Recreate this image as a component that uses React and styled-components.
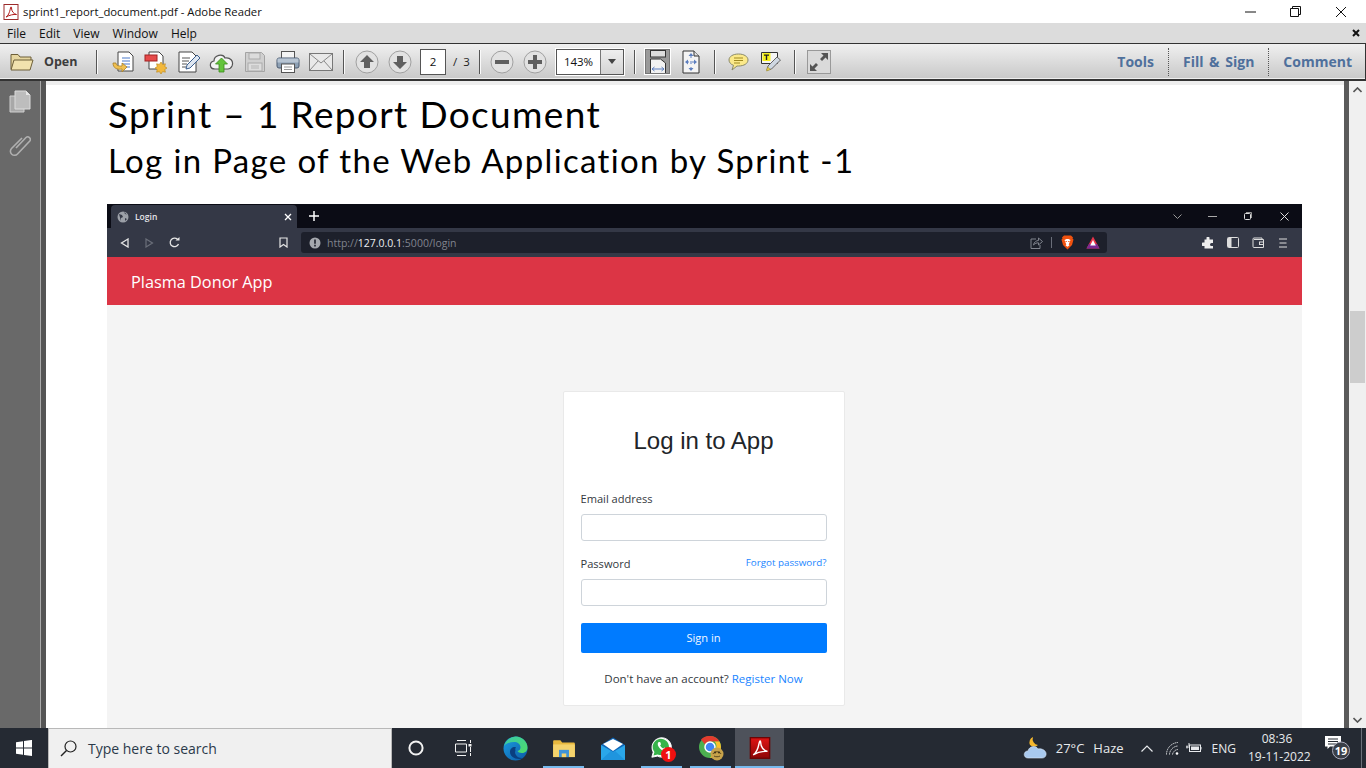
import styled, { createGlobalStyle } from "styled-components";

const GlobalStyle = createGlobalStyle`
  html, body { margin: 0; padding: 0; overflow: hidden; background: #fff; }
  * { box-sizing: border-box; }
`;

const Screen = styled.div`
  width: 1366px;
  height: 768px;
  display: flex;
  flex-direction: column;
  overflow: hidden;
  font-family: "Open Sans", "Liberation Sans", sans-serif;
`;

/* title bar + menu */
const TitleBar = styled.div`
  height: 23px;
  flex: none;
  display: flex;
  align-items: center;
  background: #fff;
  padding: 0 3px;
  font-size: 11.3px;
  color: #111;
`;
const TitleText = styled.span`
  margin-left: 4px;
  flex: 1;
`;
const WinButton = styled.div`
  width: 45px;
  height: 23px;
  display: flex;
  align-items: center;
  justify-content: center;
`;
const MenuBar = styled.div`
  height: 20px;
  flex: none;
  display: flex;
  align-items: center;
  background: #dcdcdc;
  padding: 0 6px 0 7px;
  font-size: 12px;
  color: #111;
  gap: 13px;
`;
const CloseDoc = styled.div`
  margin-left: auto;
  display: flex;
`;

/* adobe toolbar */
const Toolbar = styled.div`
  height: 38px;
  flex: none;
  display: flex;
  align-items: center;
  background: linear-gradient(#f0f0f0, #c8c8c8);
  border: 1px solid #333;
  border-width: 1.5px 1px 2px 0;
  box-shadow: inset 0 -1px 0 #eee;
  padding-left: 10px;
`;
const OpenButton = styled.div`
  width: 86px;
  display: flex;
  align-items: center;
  gap: 10px;
  font-size: 12.5px;
  font-weight: 700;
  color: #3c3c3c;
`;
const Sep = styled.div`
  width: 2px;
  height: 24px;
  flex: none;
  margin-left: ${(p) => p.$ml || 0}px;
  background: linear-gradient(90deg, #555 50%, #fafafa 50%);
`;
const Group = styled.div`
  display: flex;
  margin-left: ${(p) => p.$ml || 0}px;
`;
const Slot = styled.div`
  width: 33px;
  height: 30px;
  display: flex;
  align-items: center;
  justify-content: center;
`;
const ActiveTool = styled.div`
  width: 27px;
  height: 27px;
  display: flex;
  align-items: center;
  justify-content: center;
  background: #9a9a9a;
  border: 1px solid #fff;
  outline: 1px solid #777;
  outline-offset: -2px;
`;
const PageInput = styled.div`
  width: 26px;
  height: 26px;
  margin-left: 4px;
  background: #fff;
  border: 1px solid #555;
  display: flex;
  align-items: center;
  justify-content: center;
  font-size: 11.5px;
  color: #111;
`;
const PageCount = styled.span`
  margin-left: 7px;
  width: 16px;
  font-size: 11.5px;
  color: #222;
  white-space: pre;
`;
const ZoomBox = styled.div`
  width: 68px;
  height: 26px;
  margin-left: 5px;
  display: flex;
  background: #fff;
  border: 1px solid #555;
  box-shadow: 0 0 0 1px #fff;
  font-size: 11.5px;
  color: #111;
`;
const ZoomValue = styled.div`
  flex: 1;
  display: flex;
  align-items: center;
  justify-content: center;
  border-right: 1px solid #777;
`;
const ZoomArrow = styled.div`
  width: 22px;
  display: flex;
  align-items: center;
  justify-content: center;
  background: linear-gradient(#eee, #d4d4d4);
`;
const PanelTabs = styled.div`
  margin-left: auto;
  display: flex;
  align-items: center;
  height: 30px;
  padding-right: 13px;
`;
const PanelTab = styled.div`
  height: 28px;
  display: flex;
  align-items: center;
  padding: 0 14px;
  font-size: 14px;
  font-weight: 700;
  word-spacing: 2px;
  color: #4f709c;
  border-left: ${(p) => (p.$first ? "none" : "1px dotted #555")};
  &:last-child { padding-right: 0; }
`;

/* reader body */
const Main = styled.div`
  flex: 1;
  min-height: 0;
  display: flex;
`;
const Sidebar = styled.div`
  width: 46px;
  flex: none;
  background: #696969;
  border-right: 5px solid #555;
  box-shadow: inset -1px 0 0 #aaa;
  display: flex;
  flex-direction: column;
  padding: 9px 0 0 9px;
  gap: 20px;
`;
const Viewer = styled.div`
  flex: 1;
  min-width: 0;
  background: #fff;
  overflow: hidden;
  border-top: 4px solid #eee;
  padding-left: 61px;
`;
const DocTitle = styled.h1`
  margin: 5px 0 0 1px;
  font-family: Lato, "Open Sans", sans-serif;
  font-variant-ligatures: none;
  font-size: 37px;
  letter-spacing: 1.35px;
  line-height: 48px;
  font-weight: 400;
  color: #000;
`;
const DocSubtitle = styled.h2`
  margin: 0 0 0 1px;
  font-family: Lato, "Open Sans", sans-serif;
  font-variant-ligatures: none;
  font-size: 33px;
  letter-spacing: 1.35px;
  line-height: 44px;
  font-weight: 400;
  color: #000;
`;
const ScrollEdge = styled.div`
  width: 5px;
  flex: none;
  background: #5a5a5a;
`;
const ScrollBar = styled.div`
  width: 17px;
  flex: none;
  background: #f0f0f0;
  display: flex;
  flex-direction: column;
  align-items: center;
`;
const ScrollArrow = styled.div`
  height: 17px;
  width: 100%;
  display: flex;
  align-items: center;
  justify-content: center;
  margin-top: ${(p) => (p.$end ? "auto" : "0")};
`;
const ScrollThumb = styled.div`
  width: 15px;
  height: 72px;
  margin-top: 213px;
  background: #cdcdcd;
`;

/* screenshot of the browser inside the pdf */
const Browser = styled.div`
  width: 1195px;
  margin-top: 22px;
  background: #f4f4f4;
`;
const TabStrip = styled.div`
  height: 24px;
  display: flex;
  align-items: flex-end;
  background: #0b0c15;
  padding-left: 4px;
`;
const BrowserTab = styled.div`
  width: 186px;
  height: 23px;
  display: flex;
  align-items: center;
  background: #343846;
  border-radius: 4px 4px 0 0;
  padding: 0 5px 0 6px;
  font-size: 8.5px;
  font-weight: 600;
  color: #e4e6ea;
  gap: 6px;
`;
const TabLabel = styled.span`
  flex: 1;
`;
const NewTab = styled.div`
  width: 34px;
  height: 24px;
  display: flex;
  align-items: center;
  justify-content: center;
`;
const StripControls = styled.div`
  margin-left: auto;
  height: 24px;
  display: flex;
  align-items: center;
`;
const StripButton = styled.div`
  width: 35.7px;
  height: 24px;
  display: flex;
  align-items: center;
  justify-content: center;
`;
const AddressRow = styled.div`
  height: 29px;
  display: flex;
  align-items: center;
  background: #343846;
  padding-left: 5px;
`;
const NavSlot = styled.div`
  width: 25px;
  height: 28px;
  display: flex;
  align-items: center;
  justify-content: center;
`;
const Bookmark = styled(NavSlot)`
  margin-left: 84px;
`;
const UrlBar = styled.div`
  width: 806px;
  height: 21px;
  margin-left: 5px;
  display: flex;
  align-items: center;
  background: #1d202b;
  border-radius: 3px;
  padding: 0 7px 0 8px;
  font-size: 10.5px;
  color: #80848e;
`;
const UrlText = styled.span`
  margin-left: 6px;
  flex: 1;
`;
const UrlHost = styled.span`
  color: #eceef1;
`;
const UrlDivider = styled.div`
  width: 1px;
  height: 11px;
  background: #6a6e79;
  margin: 0 9px 0 8px;
`;
const BatWrap = styled.div`
  display: flex;
  margin-left: 12px;
`;
const ExtGroup = styled.div`
  display: flex;
  margin-left: 88px;
`;
const AppNavbar = styled.div`
  height: 48px;
  display: flex;
  align-items: center;
  background: #dc3545;
  padding: 1px 0 0 24px;
  font-size: 16.3px;
  color: #fff;
`;
const AppBody = styled.div`
  display: flex;
  justify-content: center;
  padding: 86px 2px 40px 0;
`;
const Card = styled.div`
  width: 282px;
  height: 315px;
  background: #fff;
  border: 1px solid #e9e9e9;
  border-radius: 2px;
  padding: 0 17px;
  display: flex;
  flex-direction: column;
`;
const CardTitle = styled.div`
  margin-top: 34px;
  height: 30px;
  line-height: 30px;
  text-align: center;
  font-family: "Liberation Sans", Arial, sans-serif;
  font-size: 24px;
  color: #212529;
`;
const LabelRow = styled.div`
  display: flex;
  justify-content: space-between;
  align-items: flex-start;
  height: 16px;
  line-height: 16px;
  margin-top: ${(p) => p.$mt}px;
  font-size: 11.1px;
  color: #33383d;
`;
const LinkText = styled.span`
  color: #1a85ff;
  font-size: ${(p) => p.$size || 11.5}px;
  line-height: ${(p) => (p.$lift ? "14px" : "inherit")};
`;
const Field = styled.div`
  height: 27px;
  margin-top: 7px;
  background: #fff;
  border: 1px solid #ced4da;
  border-radius: 3px;
`;
const SignIn = styled.div`
  height: 30px;
  margin-top: 17px;
  padding-bottom: 1px;
  display: flex;
  align-items: center;
  justify-content: center;
  background: #007bff;
  border-radius: 2px;
  color: #f2f7ff;
  font-size: 11.1px;
`;
const CardFooter = styled.div`
  margin-top: 18px;
  text-align: center;
  font-size: 11.5px;
  line-height: 16px;
  color: #33383d;
`;

/* windows taskbar */
const Taskbar = styled.div`
  height: 40px;
  flex: none;
  display: flex;
  align-items: stretch;
  background: #252a33;
  color: #e8eaed;
  font-size: 13px;
`;
const StartButton = styled.div`
  width: 48px;
  display: flex;
  align-items: center;
  justify-content: center;
`;
const SearchBox = styled.div`
  width: 344px;
  display: flex;
  align-items: center;
  background: #f0f0f0;
  border: 1px solid #b8b8b8;
  border-bottom: none;
  padding-left: 11px;
  font-size: 14px;
  color: #2b3a4a;
  gap: 11px;
`;
const TaskSlot = styled.div`
  width: ${(p) => p.$w || 49}px;
  padding-left: ${(p) => p.$pl || 0}px;
  display: flex;
  align-items: center;
  justify-content: center;
  position: relative;
  background: ${(p) => (p.$active ? "#4e525b" : "transparent")};
  &::after {
    content: "";
    display: ${(p) => (p.$open ? "block" : "none")};
    position: absolute;
    bottom: 0;
    left: ${(p) => (p.$active ? 0 : 4)}px;
    right: ${(p) => (p.$active ? 0 : 4)}px;
    height: 2px;
    background: #76b9ed;
  }
`;
const CountBadge = styled.span`
  position: absolute;
  left: 24px;
  top: 19px;
  width: 15px;
  height: 15px;
  border-radius: 50%;
  background: #f01010;
  color: #fff;
  font-size: 11px;
  font-weight: 700;
  line-height: 15px;
  text-align: center;
`;
const Tray = styled.div`
  margin-left: auto;
  display: flex;
  align-items: center;
  padding-right: 4px;
`;
const TrayText = styled.span`
  margin-left: ${(p) => p.$ml || 0}px;
  font-size: ${(p) => p.$size || 13}px;
  white-space: nowrap;
`;
const TrayIcon = styled.div`
  margin-left: ${(p) => p.$ml || 0}px;
  display: flex;
`;
const Clock = styled.div`
  margin-left: 12px;
  width: 58px;
  text-align: center;
  font-size: 12px;
  line-height: 18px;
  white-space: nowrap;
`;
const NotifyBox = styled.div`
  margin-left: 19px;
  width: 26px;
  height: 32px;
  display: flex;
  align-items: center;
`;
const DesktopEdge = styled.div`
  width: 1px;
  height: 40px;
  margin-left: 10px;
  background: #6b7079;
`;

const AdobeGlyph = ({ size = 16, soft }) => (
  <svg width={size} height={size} viewBox="0 0 16 16">
    <defs>
      <linearGradient id="adobeRed" x1="0" y1="0" x2="0" y2="1">
        <stop offset="0" stopColor="#e01414" />
        <stop offset="1" stopColor="#8c0606" />
      </linearGradient>
    </defs>
    <rect x="1" y="0.5" width="14" height="15" fill={soft ? "#fff" : "url(#adobeRed)"} stroke={soft ? "#9b2b2b" : "#6d0606"} />
    <path
      d="M3 13c2-1 3.500-4 4.500-9 .3-1.500 1-1.500 1 0 0 3 2 6 5 6.500-3-.3-7 .5-10.500 2.500z"
      fill="none"
      stroke={soft ? "#b01818" : "#fff"}
      strokeWidth="1"
    />
  </svg>
);

const ToolIcon = ({ kind }) => {
  switch (kind) {
    case "open-doc":
      return (
        <svg width="24" height="24" viewBox="0 0 24 24">
          <path d="M7 2h11l4 4v15H7z" fill="#fff" stroke="#444" />
          <path d="M11 8h8M11 11h8M11 14h8M13 17h6" stroke="#4a79c9" />
          <path d="M2 13c0 5 4 7 9 6v3l5-5-5-4v3c-3 0-6 0-6-3z" fill="#f1c050" stroke="#a8802a" strokeWidth=".8" />
        </svg>
      );
    case "create":
      return (
        <svg width="24" height="24" viewBox="0 0 24 24">
          <path d="M5 2h10l4 4v13H5z" fill="#fff" stroke="#444" />
          <rect x="1" y="5" width="12" height="6" fill="#e64a4a" stroke="#a12222" />
          <path d="M17 12l1.600 2.400 2.800-.6-.6 2.800 2.200 1.400-2.200 1.500.6 2.700-2.800-.6-1.600 2.400-1.600-2.400-2.800.6.600-2.700-2.200-1.500 2.200-1.400-.6-2.800 2.800.6z" fill="#f2b83c" stroke="#b98518" strokeWidth=".6" />
        </svg>
      );
    case "edit":
      return (
        <svg width="24" height="24" viewBox="0 0 24 24">
          <path d="M2 2h13l4 4v16H2z" fill="#fff" stroke="#444" />
          <path d="M5 8h8M5 11h7M5 14h5M5 17h4" stroke="#555" />
          <path d="M9 19l1-4 10-10 3 3-10 10z" fill="#dfe7f1" stroke="#3c5f8f" />
        </svg>
      );
    case "cloud":
      return (
        <svg width="25" height="24" viewBox="0 0 25 24">
          <path d="M6 19c-6 0-6-7-1-8 0-6 9-8 11-3 5-1 9 3 7 8-1 2-2 3-4 3z" fill="#f4f4f4" stroke="#555" strokeWidth="1.200" />
          <path d="M12.500 8l6 6h-3.500v8h-5v-8h-3.500z" fill="#64c43c" stroke="#3a8a1c" strokeWidth=".8" />
        </svg>
      );
    case "save":
      return (
        <svg width="22" height="22" viewBox="0 0 22 22">
          <path d="M1.500 1.500h16l3 3v16h-19z" fill="#d0d0d0" stroke="#a3a3a3" />
          <rect x="5" y="2" width="11" height="6" fill="#dcdcdc" stroke="#aaa" />
          <rect x="4" y="12" width="14" height="8" fill="#ddd" stroke="#aaa" />
          <path d="M7 15h8M7 17h8" stroke="#b5b5b5" />
        </svg>
      );
    case "print":
      return (
        <svg width="24" height="24" viewBox="0 0 24 24">
          <rect x="5.500" y="1.500" width="13" height="7" fill="#f4f4f4" stroke="#555" />
          <rect x="1" y="8" width="22" height="10" rx="2" fill="#8ea1b5" stroke="#4a5a70" />
          <rect x="1.500" y="8.500" width="21" height="4" fill="#b8c5d3" />
          <rect x="5.500" y="14" width="13" height="8.500" fill="#fff" stroke="#555" />
          <path d="M8 17h8M8 19.500h8" stroke="#999" />
        </svg>
      );
    case "mail":
      return (
        <svg width="24" height="18" viewBox="0 0 24 18">
          <rect x=".5" y=".5" width="23" height="17" fill="#e9e9e9" stroke="#777" />
          <path d="M1 1l11 9 11-9M1 17l8-9M23 17l-8-9" fill="none" stroke="#888" />
        </svg>
      );
    case "up":
    case "down":
      return (
        <svg width="24" height="24" viewBox="0 0 24 24">
          <circle cx="12" cy="12" r="11" fill="#e2e2e2" stroke="#a0a0a0" />
          <path
            d={kind === "up" ? "M12 5l7 7h-4v6H9v-6H5z" : "M12 19l7-7h-4V6H9v6H5z"}
            fill="#5f5f5f"
          />
        </svg>
      );
    case "minus":
    case "plus":
      return (
        <svg width="24" height="24" viewBox="0 0 24 24">
          <circle cx="12" cy="12" r="11" fill="#e2e2e2" stroke="#a0a0a0" />
          <path d={kind === "minus" ? "M5 10h14v4H5z" : "M10 5h4v5h5v4h-5v5h-4v-5H5v-4h5z"} fill="#5f5f5f" />
        </svg>
      );
    case "fit-width":
      return (
        <svg width="18" height="24" viewBox="0 0 18 24">
          <rect x="1.500" y=".5" width="15" height="6.500" fill="#dcdcdc" stroke="#333" />
          <path d="M1.500 9h10l5 4v10.500h-15z" fill="#f2f2f2" stroke="#333" />
          <path d="M3 19h12M3 19l2.500-2M3 19l2.500 2M15 19l-2.500-2M15 19l-2.500 2" stroke="#5d7fc0" fill="none" />
        </svg>
      );
    case "fit-page":
      return (
        <svg width="18" height="24" viewBox="0 0 18 24">
          <path d="M1 1h11l5 5v17H1z" fill="#f4f4f4" stroke="#333" />
          <path d="M12 1v5h5" fill="#e0e0e0" stroke="#333" />
          <path d="M9 5v15M4 12h10" stroke="#5d7fc0" strokeDasharray="3 3" />
          <path d="M9 3l-2.500 3h5zM9 21l-2.500-3h5zM3 12l3-2.500v5zM15 12l-3-2.500v5z" fill="#5d7fc0" />
        </svg>
      );
    case "note":
      return (
        <svg width="21" height="18" viewBox="0 0 21 18">
          <path d="M10.500 1C5 1 1 3.500 1 7c0 2.500 2 4.500 4.500 5.300L4 17l5-4h1.500C16 13 20 10.500 20 7s-4-6-9.500-6z" fill="#fbe98a" stroke="#8a8a6a" />
          <path d="M6 5h9M6 7.500h9M6 10h6" stroke="#a08a20" />
        </svg>
      );
    case "highlight":
      return (
        <svg width="21" height="21" viewBox="0 0 21 21">
          <path d="M.5 1.500h16v11H.5z" fill="#f4f4f4" stroke="#333" />
          <rect x="1.500" y="2" width="8" height="8" fill="#f7f01c" />
          <path d="M3 3.500h5v1.200H6.200V9H4.800V4.700H3z" fill="#222" />
          <path d="M6 19l1-4 9-9 3.500 3-9 9z" fill="#cfd8e2" stroke="#666" />
          <path d="M5.500 20l1-4 3 2.500z" fill="#f2d648" stroke="#8a7a20" strokeWidth=".5" />
        </svg>
      );
    case "expand":
      return (
        <svg width="24" height="24" viewBox="0 0 24 24">
          <rect x=".5" y=".5" width="23" height="23" fill="#dadada" stroke="#999" />
          <path d="M14 3h7v7l-2.500-2.500L15 11l-2-2 3.500-3.500zM10 21H3v-7l2.500 2.500L9 13l2 2-3.500 3.500z" fill="#555" />
        </svg>
      );
    default:
      return null;
  }
};

const FirstTools = ["open-doc", "create", "edit", "cloud", "save", "print", "mail"];

const Brave = () => (
  <svg width="13" height="15" viewBox="0 0 13 15">
    <path d="M3 .5h7l2 2-.5 1 1 1L11 10l-4.500 4.500L2 10 .5 4.500l1-1-.5-1z" fill="#f0520f" />
    <path d="M3.500 5l2-1h2l2 1-1 2.500-.8 2 .8.800-2 1.500-2-1.500.8-.8-.8-2z" fill="#fff" />
    <path d="M4.500 6.500h1.300M7.200 6.500h1.300" stroke="#f0520f" />
  </svg>
);

const Bat = () => (
  <svg width="14" height="13" viewBox="0 0 14 13">
    <path d="M7 .5L13.500 12.500H.5z" fill="#e8344a" />
    <path d="M.5 12.500h13L11 8H3z" fill="#7a2a94" />
    <path d="M7 4l2.800 5.500H4.200z" fill="#fff" />
  </svg>
);

const Edge = () => (
  <svg width="25" height="25" viewBox="0 0 25 25">
    <defs>
      <linearGradient id="edgeA" x1="0" y1="0" x2="1" y2="1">
        <stop offset="0" stopColor="#39c9a8" />
        <stop offset="1" stopColor="#4fdc6a" />
      </linearGradient>
      <linearGradient id="edgeB" x1="0" y1="0" x2="1" y2="1">
        <stop offset="0" stopColor="#1b9de2" />
        <stop offset="1" stopColor="#0c59a4" />
      </linearGradient>
    </defs>
    <circle cx="12.500" cy="12.500" r="12" fill="url(#edgeB)" />
    <path d="M1 10C3 3 9 .5 13 .5c6 0 11.500 5 11.500 11 0 3-2 5.500-5.500 5.500-2.500 0-4-1-4.500-2 2-.5 3-2 3-3.500C17.500 8 14.500 6 11 6 7 6 3 7.500 1 10z" fill="url(#edgeA)" />
    <path d="M12 11c-3 0-5 2-5 5 0 4 4 7 9 7 1.500 0 3-.3 4-1-3 .5-6-1-7-3-1-1.500-1.200-3-.5-4.500-.5-1.500 0-3 .5-3.500z" fill="#0a3f80" />
  </svg>
);

const Folder = () => (
  <svg width="22" height="19" viewBox="0 0 24 21">
    <path d="M0 2.500a1 1 0 0 1 1-1h7l2 2.500h13a1 1 0 0 1 1 1V20H0z" fill="#e9b93e" />
    <rect x="0" y="6" width="24" height="14" fill="#f5d36c" />
    <rect x="6.500" y="12" width="11" height="8" fill="#3f93d8" />
    <rect x="9.500" y="16" width="5" height="4" fill="#f5d36c" />
  </svg>
);

const Mail = () => (
  <svg width="24" height="23" viewBox="0 0 24 23">
    <path d="M12 .5L24 8v14.500H0V8z" fill="#0f66b8" />
    <path d="M2 7l10 7 10-7-10-5z" fill="#fff" />
    <path d="M0 8l12 7 12-7v15H0z" fill="#2aa7ea" />
    <path d="M0 23l10-9 2 1 2-1 10 9z" fill="#1f95de" />
  </svg>
);

const WhatsApp = () => (
  <svg width="24" height="24" viewBox="0 0 26 26">
    <path d="M2 23l1.500-5.500A10.500 10.500 0 1 1 8 21.800z" fill="#fff" stroke="#fff" />
    <path d="M3.800 21l1-3.700A8.800 8.800 0 1 1 8.300 20z" fill="#37b34a" />
    <path d="M9.500 6.500c-1.500 1-1.500 3 0 5.500 1.500 2.500 4 4 6 4 1.500 0 2.500-1 2.500-2l-2.500-1.500-1 1c-1.500-.5-3-2-3.500-3.500l1-1L11 6.500z" fill="#fff" />
  </svg>
);

const Chrome = () => (
  <svg width="26" height="26" viewBox="0 0 26 26">
    <circle cx="12" cy="12" r="11" fill="#4caf50" />
    <path d="M12 1a11 11 0 0 1 9.500 5.500H12a5.500 5.500 0 0 0-5 3L3 4.500A11 11 0 0 1 12 1z" fill="#e33b2e" />
    <path d="M21.500 6.500A11 11 0 0 1 12 23l5-8.500a5.500 5.500 0 0 0-.5-8z" fill="#fbc02d" />
    <circle cx="12" cy="12" r="5" fill="#4285f4" stroke="#fff" strokeWidth="1.500" />
    <circle cx="19" cy="19" r="6.500" fill="#c7a24a" />
    <path d="M15 19c1-3 7-3 8 0M16 21c1 1 5 1 6 0" stroke="#5d4a1e" fill="none" />
    <circle cx="17" cy="17.500" r="1" fill="#3b2f14" />
    <circle cx="21" cy="17.500" r="1" fill="#3b2f14" />
  </svg>
);

function App() {
  return (
    <Screen>
      <GlobalStyle />
      <TitleBar>
        <AdobeGlyph soft />
        <TitleText>sprint1_report_document.pdf - Adobe Reader</TitleText>
        <WinButton>
          <svg width="11" height="2" viewBox="0 0 11 2">
            <path d="M0 1h11" stroke="#111" />
          </svg>
        </WinButton>
        <WinButton>
          <svg width="11" height="11" viewBox="0 0 11 11">
            <path d="M.5 2.500h8v8h-8zM2.500 2.500v-2h8v8h-2" fill="none" stroke="#111" />
          </svg>
        </WinButton>
        <WinButton>
          <svg width="12" height="12" viewBox="0 0 12 12">
            <path d="M1 1l10 10M11 1L1 11" stroke="#111" />
          </svg>
        </WinButton>
      </TitleBar>

      <MenuBar>
        <span>File</span>
        <span>Edit</span>
        <span>View</span>
        <span>Window</span>
        <span>Help</span>
        <CloseDoc>
          <svg width="8" height="8" viewBox="0 0 8 8">
            <path d="M1 1l6 6M7 1L1 7" stroke="#111" strokeWidth="2" />
          </svg>
        </CloseDoc>
      </MenuBar>

      <Toolbar>
        <OpenButton>
          <svg width="24" height="19" viewBox="0 0 24 19">
            <path d="M1 17V2.500h7l2 2.500h11v3" fill="#e6d6a0" stroke="#6d5f38" />
            <path d="M1 18l3-10h19l-3 10z" fill="#f1e2ae" stroke="#6d5f38" />
          </svg>
          Open
        </OpenButton>
        <Sep />
        <Group $ml={8}>
          {FirstTools.map((k) => (
            <Slot key={k}>
              <ToolIcon kind={k} />
            </Slot>
          ))}
        </Group>
        <Sep $ml={6} />
        <Group $ml={5}>
          <Slot><ToolIcon kind="up" /></Slot>
          <Slot><ToolIcon kind="down" /></Slot>
        </Group>
        <PageInput>2</PageInput>
        <PageCount>/  3</PageCount>
        <Sep $ml={10} />
        <Group $ml={4}>
          <Slot><ToolIcon kind="minus" /></Slot>
          <Slot><ToolIcon kind="plus" /></Slot>
        </Group>
        <ZoomBox>
          <ZoomValue>143%</ZoomValue>
          <ZoomArrow>
            <svg width="8" height="5" viewBox="0 0 8 5">
              <path d="M0 0h8L4 5z" fill="#444" />
            </svg>
          </ZoomArrow>
        </ZoomBox>
        <Sep $ml={10} />
        <Group $ml={5}>
          <Slot>
            <ActiveTool>
              <ToolIcon kind="fit-width" />
            </ActiveTool>
          </Slot>
          <Slot><ToolIcon kind="fit-page" /></Slot>
        </Group>
        <Sep $ml={7} />
        <Group $ml={6}>
          <Slot><ToolIcon kind="note" /></Slot>
          <Slot><ToolIcon kind="highlight" /></Slot>
        </Group>
        <Sep $ml={6} />
        <Group $ml={6}>
          <Slot><ToolIcon kind="expand" /></Slot>
        </Group>
        <PanelTabs>
          <PanelTab $first>Tools</PanelTab>
          <PanelTab>Fill &amp; Sign</PanelTab>
          <PanelTab>Comment</PanelTab>
        </PanelTabs>
      </Toolbar>

      <Main>
        <Sidebar>
          <svg width="22" height="23" viewBox="0 0 22 23">
            <path d="M1 6h14v16H1z" fill="#a8a8a8" stroke="#d0d0d0" />
            <path d="M6 1h11l4 4v14H6z" fill="#bdbdbd" stroke="#dcdcdc" />
            <path d="M17 1v4h4z" fill="#e6e6e6" />
          </svg>
          <svg width="22" height="24" viewBox="0 0 22 24">
            <path
              d="M7 15L17 4.500a2.600 2.600 0 0 1 3.800 3.500L8.500 21a4 4 0 0 1-6-5.500L13 5"
              fill="none"
              stroke="#b0b0b0"
              strokeWidth="1.600"
            />
          </svg>
        </Sidebar>

        <Viewer>
          <DocTitle>Sprint – 1 Report Document</DocTitle>
          <DocSubtitle>Log in Page of the Web Application by Sprint -1</DocSubtitle>
          <Browser>
            <TabStrip>
              <BrowserTab>
                <svg width="12" height="12" viewBox="0 0 12 12">
                  <circle cx="6" cy="6" r="5.500" fill="#9ca0a8" />
                  <path d="M2 3l3 1 1 2-2 1 0 3M7 1l1 2 2 .5M8 7l2 1-2 2z" fill="#343846" />
                </svg>
                <TabLabel>Login</TabLabel>
                <svg width="8" height="8" viewBox="0 0 8 8">
                  <path d="M1 1l6 6M7 1L1 7" stroke="#fff" strokeWidth="1.300" />
                </svg>
              </BrowserTab>
              <NewTab>
                <svg width="10" height="10" viewBox="0 0 10 10">
                  <path d="M5 0v10M0 5h10" stroke="#fff" strokeWidth="1.500" />
                </svg>
              </NewTab>
              <StripControls>
                <StripButton>
                  <svg width="9" height="5" viewBox="0 0 9 5">
                    <path d="M.5.500L4.500 4.500 8.500.5" fill="none" stroke="#999" />
                  </svg>
                </StripButton>
                <StripButton>
                  <svg width="9" height="1" viewBox="0 0 9 1">
                    <path d="M0 .5h9" stroke="#aaa" />
                  </svg>
                </StripButton>
                <StripButton>
                  <svg width="8" height="8" viewBox="0 0 8 8">
                    <rect x=".5" y="1.500" width="6" height="6" rx="1" fill="none" stroke="#ddd" />
                    <path d="M2 .5h5.500V6" fill="none" stroke="#999" />
                  </svg>
                </StripButton>
                <StripButton>
                  <svg width="9" height="9" viewBox="0 0 9 9">
                    <path d="M.5.500l8 8M8.500.5l-8 8" stroke="#ddd" />
                  </svg>
                </StripButton>
              </StripControls>
            </TabStrip>

            <AddressRow>
              <NavSlot>
                <svg width="9" height="10" viewBox="0 0 9 10">
                  <path d="M8 1L1.500 5 8 9z" fill="none" stroke="#e6e6e6" strokeWidth="1.300" />
                </svg>
              </NavSlot>
              <NavSlot>
                <svg width="9" height="10" viewBox="0 0 9 10">
                  <path d="M1 1l6.500 4L1 9z" fill="none" stroke="#6b6f7a" strokeWidth="1.200" />
                </svg>
              </NavSlot>
              <NavSlot>
                <svg width="11" height="11" viewBox="0 0 11 11">
                  <path d="M9.500 7A4.300 4.300 0 1 1 8.500 2.300" fill="none" stroke="#e6e6e6" strokeWidth="1.300" />
                  <path d="M6.500 3.500h4v-3.500z" fill="#e6e6e6" />
                </svg>
              </NavSlot>
              <Bookmark>
                <svg width="9" height="11" viewBox="0 0 9 11">
                  <path d="M1 1h7v9L4.500 7.500 1 10z" fill="none" stroke="#e6e6e6" strokeWidth="1.200" />
                </svg>
              </Bookmark>
              <UrlBar>
                <svg width="12" height="12" viewBox="0 0 12 12">
                  <circle cx="6" cy="6" r="5.500" fill="#a5a8ae" />
                  <path d="M5.200 2.500h1.600v4.200H5.200zM5.200 7.800h1.600v1.600H5.200z" fill="#1d202b" />
                </svg>
                <UrlText>
                  http://<UrlHost>127.0.0.1</UrlHost>:5000/login
                </UrlText>
                <svg width="13" height="12" viewBox="0 0 13 12">
                  <path d="M6 2H1v9.500h9V8" fill="none" stroke="#80848e" />
                  <path d="M3.500 8c.5-3 3-4.500 5-4.500V1L12.500 4.500 8.500 8V5.800C6.500 5.800 5 6.500 3.500 8z" fill="none" stroke="#80848e" />
                </svg>
                <UrlDivider />
                <Brave />
                <BatWrap><Bat /></BatWrap>
              </UrlBar>
              <ExtGroup>
                <NavSlot>
                  <svg width="12" height="12" viewBox="0 0 12 12">
                    <path d="M4.500 1a1.500 1.500 0 0 1 3 0V2.500H11V6H9.500a1.500 1.500 0 0 0 0 3H11v2.500H2.500V9H1a1.700 1.700 0 0 1 0-3.400h1.500V2.500h2z" fill="#eee" />
                  </svg>
                </NavSlot>
                <NavSlot>
                  <svg width="12" height="11" viewBox="0 0 12 11">
                    <rect x=".5" y=".5" width="11" height="10" rx="1" fill="none" stroke="#ddd" />
                    <rect x="1" y="1" width="3.500" height="9" fill="#ddd" />
                  </svg>
                </NavSlot>
                <NavSlot>
                  <svg width="12" height="11" viewBox="0 0 12 11">
                    <path d="M10 2.500V1H2a1 1 0 0 0-1 1v7.500a1 1 0 0 0 1 1h9.500V2.500H2" fill="none" stroke="#ddd" />
                    <rect x="7.500" y="5" width="4" height="2.500" fill="#343846" stroke="#ddd" />
                  </svg>
                </NavSlot>
                <NavSlot>
                  <svg width="8" height="10" viewBox="0 0 8 10">
                    <path d="M0 1h8M.5 5h7M0 9h8" stroke="#ddd" />
                  </svg>
                </NavSlot>
              </ExtGroup>
            </AddressRow>

            <AppNavbar>Plasma Donor App</AppNavbar>

            <AppBody>
              <Card>
                <CardTitle>Log in to App</CardTitle>
                <LabelRow $mt={35}>Email address</LabelRow>
                <Field />
                <LabelRow $mt={15}>
                  Password
                  <LinkText $size={9.8} $lift>Forgot password?</LinkText>
                </LabelRow>
                <Field />
                <SignIn>Sign in</SignIn>
                <CardFooter>
                  Don't have an account? <LinkText>Register Now</LinkText>
                </CardFooter>
              </Card>
            </AppBody>
          </Browser>
        </Viewer>

        <ScrollEdge />
        <ScrollBar>
          <ScrollArrow>
            <svg width="9" height="6" viewBox="0 0 9 6">
              <path d="M.5 5l4-4 4 4" fill="none" stroke="#555" strokeWidth="1.600" />
            </svg>
          </ScrollArrow>
          <ScrollThumb />
          <ScrollArrow $end>
            <svg width="9" height="6" viewBox="0 0 9 6">
              <path d="M.5 1l4 4 4-4" fill="none" stroke="#555" strokeWidth="1.600" />
            </svg>
          </ScrollArrow>
        </ScrollBar>
      </Main>

      <Taskbar>
        <StartButton>
          <svg width="16" height="16" viewBox="0 0 16 16">
            <path d="M0 2.200l7-1v6.300H0zM8 1l8-1.100v7.600H8zM0 8.500h7v6.300l-7-1zM8 8.500h8V16l-8-1.100z" fill="#fff" />
          </svg>
        </StartButton>
        <SearchBox>
          <svg width="17" height="17" viewBox="0 0 17 17">
            <circle cx="10.500" cy="6.500" r="5.500" fill="none" stroke="#222" strokeWidth="1.200" />
            <path d="M6.500 10.500L1 16" stroke="#222" strokeWidth="1.400" />
          </svg>
          Type here to search
        </SearchBox>
        <TaskSlot $w={47}>
          <svg width="16" height="16" viewBox="0 0 16 16">
            <circle cx="8" cy="8" r="6.600" fill="none" stroke="#f2f2f2" strokeWidth="2" />
          </svg>
        </TaskSlot>
        <TaskSlot $w={48}>
          <svg width="17" height="16" viewBox="0 0 17 16">
            <path d="M2 .5h9M2 15.500h9M.5 4h11v8H.5z" fill="none" stroke="#f2f2f2" />
            <path d="M15.500 0v3M15.500 7v5M15.500 13v3" stroke="#f2f2f2" />
            <rect x="13.500" y="4" width="3" height="2.500" fill="#f2f2f2" />
          </svg>
        </TaskSlot>
        <TaskSlot $w={52} $pl={4}><Edge /></TaskSlot>
        <TaskSlot $open><Folder /></TaskSlot>
        <TaskSlot><Mail /></TaskSlot>
        <TaskSlot $open>
          <WhatsApp />
          <CountBadge>1</CountBadge>
        </TaskSlot>
        <TaskSlot $open><Chrome /></TaskSlot>
        <TaskSlot $open $active><AdobeGlyph size={22} /></TaskSlot>
        <Tray>
          <TrayIcon>
            <svg width="25" height="24" viewBox="0 0 25 24">
              <path d="M10 1a6 6 0 0 0 5 8 6 6 0 0 1-8 0A6 6 0 0 1 10 1z" fill="#f5b82e" />
              <path d="M5 22c-5 0-5-7 0-7 1-5 8-6 10-2 4-1 9 2 8 6-.5 2-2 3-4 3z" fill="#a9c9ef" stroke="#dbe8f8" strokeWidth=".6" />
            </svg>
          </TrayIcon>
          <TrayText $ml={8}>27°C</TrayText>
          <TrayText $ml={9}>Haze</TrayText>
          <TrayIcon $ml={17}>
            <svg width="12" height="7" viewBox="0 0 12 7">
              <path d="M.5 6.500L6 1l5.500 5.500" fill="none" stroke="#e8eaed" strokeWidth="1.200" />
            </svg>
          </TrayIcon>
          <TrayIcon $ml={13}>
            <svg width="13" height="13" viewBox="0 0 13 13">
              <path d="M.5 12.500A12 12 0 0 1 12 .5M3.500 12.500A9 9 0 0 1 12 4M6.500 12.500A6 6 0 0 1 12 7.500" fill="none" stroke="#d8dadd" strokeDasharray="1.500 .6" />
              <circle cx="11" cy="11.500" r="1.300" fill="#fff" />
            </svg>
          </TrayIcon>
          <TrayIcon $ml={7}>
            <svg width="16" height="12" viewBox="0 0 16 12">
              <rect x="3.500" y="3" width="11" height="6.500" fill="none" stroke="#e8eaed" />
              <rect x="5" y="4.500" width="8" height="3.500" fill="#e8eaed" />
              <path d="M15 5v2.500" stroke="#e8eaed" />
              <path d="M0 5h4M1 3.500v3M3 1v3" stroke="#e8eaed" />
            </svg>
          </TrayIcon>
          <TrayText $ml={10} $size={12}>ENG</TrayText>
          <Clock>
            08:36
            <br />
            19-11-2022
          </Clock>
          <NotifyBox>
            <svg width="26" height="26" viewBox="0 0 26 26">
              <path d="M0 1h16v10.500H5L2.500 14v-2.500H0z" fill="#fff" />
              <path d="M3 4h10M3 6.500h10M3 9h10" stroke="#252a33" />
              <circle cx="16" cy="15.500" r="8.500" fill="#3a3f48" stroke="#aab" />
              <text x="16" y="19.500" textAnchor="middle" fontSize="11" fontWeight="700" fill="#fff" fontFamily="Open Sans">19</text>
            </svg>
          </NotifyBox>
          <DesktopEdge />
        </Tray>
      </Taskbar>
    </Screen>
  );
}

export default App;
